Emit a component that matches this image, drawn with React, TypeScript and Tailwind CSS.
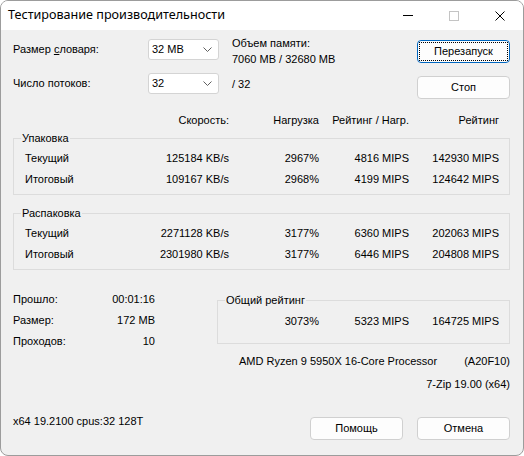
import React from 'react';

const font = { fontFamily: '"Liberation Sans", Arial, sans-serif' };

// right-aligned numeric cell, columns end at 229 / 319 / 409 / 499
function Cell({ children, w = 'w-[90px]' }: { children?: React.ReactNode; w?: string }) {
  return <div className={`${w} shrink-0 text-right whitespace-nowrap`}>{children}</div>;
}

function Row({ label, speed, load, perLoad, rating }: { label: string; speed: string; load: string; perLoad: string; rating: string }) {
  return (
    <div className="flex h-[21px] items-center">
      <div className="w-[125px] shrink-0 pl-[11px]">{label}</div>
      <Cell>{speed}</Cell>
      <Cell>{load}</Cell>
      <Cell>{perLoad}</Cell>
      <Cell>{rating}</Cell>
    </div>
  );
}

function Group({ title, children, className = '' }: { title: string; children: React.ReactNode; className?: string }) {
  return (
    <fieldset className={`border border-[#dcdcdc] ${className}`}>
      <legend className="ml-[7px] px-[1px] leading-[14px]">{title}</legend>
      {children}
    </fieldset>
  );
}

function Combo({ value }: { value: string }) {
  return (
    <div className="flex h-[21px] w-[71px] items-center justify-between rounded-[3px] border border-[#d4d4d4] bg-white pl-[3px] pr-[6px]">
      <span>{value}</span>
      <svg width="9" height="5" viewBox="0 0 9 5" fill="none">
        <path d="M0.5 0.5 L4.5 4.5 L8.5 0.5" stroke="#5f5f5f" strokeWidth="1" />
      </svg>
    </div>
  );
}

function Btn({ children, focused = false }: { children: React.ReactNode; focused?: boolean }) {
  return (
    <button
      className={`flex h-[23px] w-[93px] items-center justify-center rounded-[4px] border bg-[#fdfdfd] p-[1px] ${focused ? 'border-[#0067c0]' : 'border-[#d0d0d0]'}`}
    >
      <span className={`flex h-full w-full items-center justify-center ${focused ? 'border border-dotted border-black' : ''}`}>{children}</span>
    </button>
  );
}

export default function App() {
  return (
    <div className="h-[456px] w-[524px] bg-white">
      <div className="flex h-[456px] w-[524px] flex-col overflow-hidden rounded-[8px] border border-[#9c9c9c] bg-[#f0f0f0] text-[11px] text-black" style={font}>
        {/* title bar */}
        <div className="flex h-[29px] shrink-0 items-center bg-white">
          <span className="ml-[7px] text-[12.6px]" style={{ fontFamily: '"Noto Sans", "Open Sans", sans-serif' }}>
            Тестирование производительности
          </span>
          <div className="ml-auto flex items-center">
            <div className="flex w-[46px] justify-center">
              <div className="h-px w-[10px] bg-black" />
            </div>
            <div className="flex w-[46px] justify-center">
              <div className="h-[10px] w-[10px] border border-[#c4c4c4]" />
            </div>
            <div className="flex w-[46px] justify-center">
              <svg width="10" height="10" viewBox="0 0 10 10">
                <path d="M0.5 0.5 L9.5 9.5 M9.5 0.5 L0.5 9.5" stroke="#000" strokeWidth="1" />
              </svg>
            </div>
          </div>
        </div>

        {/* body */}
        <div className="flex flex-col pl-[12px] pr-[13px]">
          {/* top controls */}
          <div className="flex">
            <div className="flex flex-col gap-[13px] pt-[9px]">
              <div className="flex items-center">
                <div className="w-[135px]">
                  Размер <span className="underline">с</span>ловаря:
                </div>
                <Combo value="32 MB" />
              </div>
              <div className="flex items-center">
                <div className="w-[135px]">Число потоков:</div>
                <Combo value="32" />
              </div>
            </div>
            <div className="ml-[13px] flex flex-col pt-[5px] leading-[16px]">
              <div>Объем памяти:</div>
              <div>7060 MB / 32680 MB</div>
              <div className="mt-[9px]">/ 32</div>
            </div>
            <div className="ml-auto flex flex-col gap-[13px] pt-[10px]">
              <Btn focused>Перезапуск</Btn>
              <Btn>Стоп</Btn>
            </div>
          </div>

          {/* column headers */}
          <div className="mt-[13px] flex h-[16px] items-center">
            <div className="w-[126px] shrink-0" />
            <Cell>Скорость:</Cell>
            <Cell>Нагрузка</Cell>
            <Cell>Рейтинг / Нагр.</Cell>
            <Cell>Рейтинг</Cell>
          </div>

          <Group title="Упаковка" className="mt-[3px] pb-[4px] pt-[3px]">
            <Row label="Текущий" speed="125184 KB/s" load="2967%" perLoad="4816 MIPS" rating="142930 MIPS" />
            <Row label="Итоговый" speed="109167 KB/s" load="2968%" perLoad="4199 MIPS" rating="124642 MIPS" />
          </Group>

          <Group title="Распаковка" className="mt-[11px] pb-[4px] pt-[3px]">
            <Row label="Текущий" speed="2271128 KB/s" load="3177%" perLoad="6360 MIPS" rating="202063 MIPS" />
            <Row label="Итоговый" speed="2301980 KB/s" load="3177%" perLoad="6446 MIPS" rating="204808 MIPS" />
          </Group>

          {/* lower section */}
          <div className="mt-[19px] flex">
            <div className="flex w-[142px] flex-col">
              {[
                ['Прошло:', '00:01:16'],
                ['Размер:', '172 MB'],
                ['Проходов:', '10'],
              ].map(([k, v]) => (
                <div key={k} className="flex h-[21px] items-center justify-between">
                  <span>{k}</span>
                  <span>{v}</span>
                </div>
              ))}
            </div>
            <div className="ml-[62px] flex flex-1 flex-col">
              <Group title="Общий рейтинг" className="mt-[4px] pb-[14px] pt-[6px]">
                <div className="flex h-[16px] items-center">
                  <div className="w-[11px] shrink-0" />
                  <Cell>3073%</Cell>
                  <Cell>5323 MIPS</Cell>
                  <Cell>164725 MIPS</Cell>
                </div>
              </Group>
              <div className="mt-[9px] flex h-[16px] items-center pl-[22px]">
                <span>AMD Ryzen 9 5950X 16-Core Processor</span>
                <span className="ml-auto">(A20F10)</span>
              </div>
              <div className="mt-[7px] h-[16px] text-right leading-[16px]">7-Zip 19.00 (x64)</div>
            </div>
          </div>

          {/* footer */}
          <div className="mt-[21px] flex items-start">
            <span className="leading-[16px]">x64 19.2100 cpus:32 128T</span>
            <div className="ml-auto mt-[4px] flex gap-[14px]">
              <Btn>Помощь</Btn>
              <Btn>Отмена</Btn>
            </div>
          </div>
        </div>
      </div>
    </div>
  );
}
